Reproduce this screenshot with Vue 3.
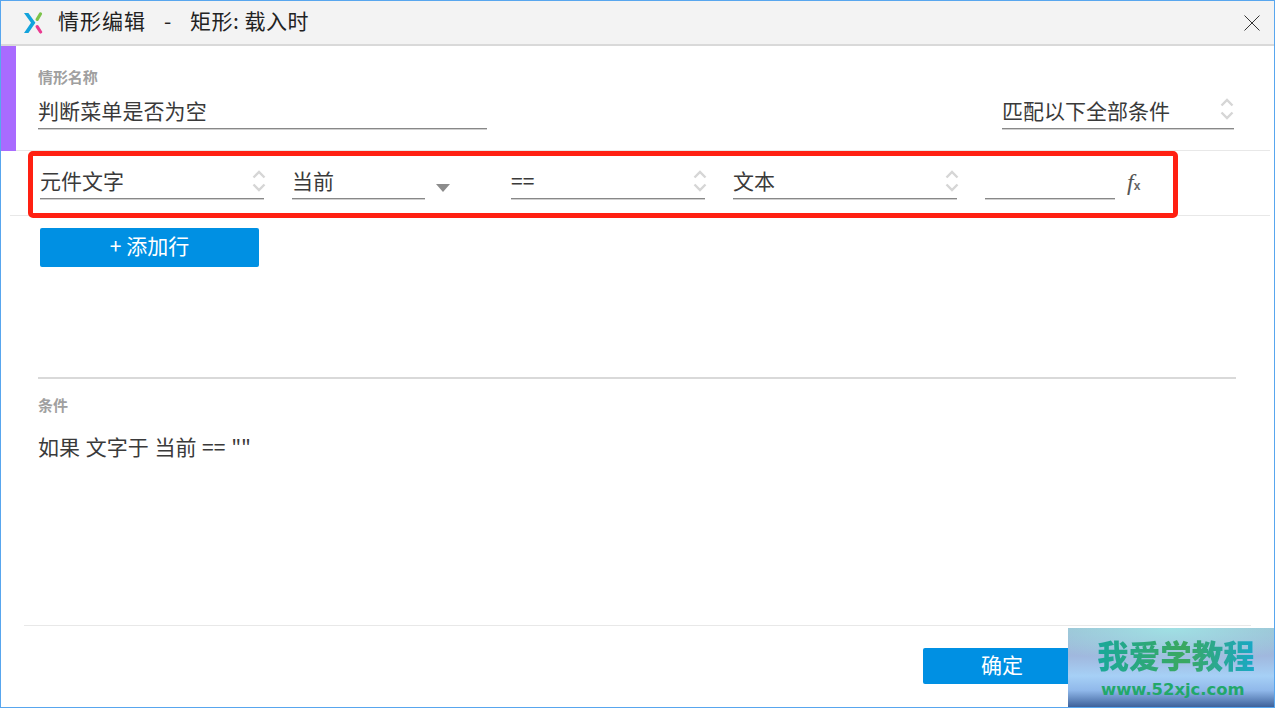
<script setup>
const fields = [
  { text: '元件文字', width: 224, gap: 28, chevron: true },
  { text: '当前', width: 133, gap: 86, caret: true },
  { text: '==', width: 194, gap: 28, chevron: true },
  { text: '文本', width: 224, gap: 28, chevron: true },
  { text: '', width: 130, gap: 0, fx: true },
]
</script>

<template>
  <div class="window">
    <header class="titlebar">
      <svg class="logo" width="20" height="22" viewBox="0 0 20 22">
        <path d="M0 1 L4.4 1 L11.4 10.8 L4.4 21 L0 21 L7 10.8 Z" fill="#12a3dc" />
        <path d="M13.2 7.4 L16.4 2" stroke="#7cc34a" stroke-width="3.2" stroke-linecap="round" fill="none" />
        <path d="M13.2 14.6 L16.6 20" stroke="#ea3a90" stroke-width="3.2" stroke-linecap="round" fill="none" />
      </svg>
      <span class="title-main">情形编辑</span>
      <span class="title-sep">-</span>
      <span class="title-sub">矩形: 载入时</span>
      <svg class="close" width="18" height="18" viewBox="0 0 18 18">
        <path d="M1.5 1.5 L16.5 16.5 M16.5 1.5 L1.5 16.5" stroke="#333" stroke-width="1" fill="none" />
      </svg>
    </header>

    <section class="head">
      <div class="accent"></div>
      <div class="head-body">
        <div class="head-left">
          <div class="label">情形名称</div>
          <div class="name-input">判断菜单是否为空</div>
        </div>
        <div class="match field">
          <span class="value">匹配以下全部条件</span>
          <svg class="chev" width="14" height="22" viewBox="0 0 14 22">
            <path d="M1.5 7.5 L7 2 L12.5 7.5 M1.5 14.5 L7 20 L12.5 14.5" stroke="#d6d6d6" stroke-width="2.4" fill="none" />
          </svg>
        </div>
      </div>
    </section>

    <section class="row">
      <template v-for="(f, i) in fields" :key="i">
        <div class="field" :style="{ width: f.width + 'px', marginRight: f.gap + 'px' }">
          <span class="value">{{ f.text }}</span>
          <svg v-if="f.chevron" class="chev" width="14" height="22" viewBox="0 0 14 22">
            <path d="M1.5 7.5 L7 2 L12.5 7.5 M1.5 14.5 L7 20 L12.5 14.5" stroke="#d6d6d6" stroke-width="2.4" fill="none" />
          </svg>
          <span v-if="f.caret" class="caret"></span>
        </div>
        <span v-if="f.fx" class="fx"><i>f</i><b>x</b></span>
      </template>
    </section>

    <div class="add-wrap">
      <button class="btn add">+ 添加行</button>
    </div>

    <section class="cond">
      <div class="label">条件</div>
      <div class="cond-text">如果 文字于 当前 == ""</div>
    </section>

    <footer class="foot">
      <button class="btn ok">确定</button>
    </footer>

    <div class="annot"></div>

    <div class="mark">
      <div class="mark-title">我爱学教程</div>
      <div class="mark-url">www.52xjc.com</div>
    </div>
  </div>
</template>

<style>
html, body { margin: 0; background: #fff; }
</style>

<style scoped>
.window {
  position: relative;
  width: 1275px;
  height: 708px;
  box-sizing: border-box;
  border: 1px solid #58a6ee;
  background: #fff;
  display: flex;
  flex-direction: column;
  overflow: hidden;
  font-family: "Noto Sans CJK SC", "Liberation Sans", sans-serif;
  color: #3a3a3a;
}
.titlebar {
  height: 45px;
  flex: none;
  box-sizing: border-box;
  background: #f3f3f3;
  border-bottom: 2px solid #d9d9d9;
  display: flex;
  align-items: center;
  padding-left: 23px;
  font-size: 21px;
  line-height: 36px;
  color: #222;
}
.logo { flex: none; }
.title-main, .title-sep, .title-sub { position: relative; top: -3px; }
.title-main { margin-left: 14px; width: 88px; letter-spacing: 1px; white-space: nowrap; }
.title-sep { margin-left: 18px; width: 26px; }
.title-sub { white-space: nowrap; letter-spacing: 0.5px; }
.close { margin-left: auto; margin-right: 13px; }

.head {
  height: 105px;
  flex: none;
  display: flex;
  box-sizing: border-box;
}
.accent { width: 15px; flex: none; background: #a96bff; }
.head-body {
  flex: 1;
  margin-right: 4px;
  border-bottom: 1px solid #e8e8e8;
  display: flex;
  align-items: flex-start;
  justify-content: space-between;
  padding: 21px 36px 0 22px;
}
.head-left { width: 449px; }
.label {
  font-size: 15px;
  font-weight: 700;
  line-height: 20px;
  color: #a0a0a0;
  letter-spacing: -0.1px;
}
.name-input {
  margin-top: 11px;
  font-size: 21px;
  line-height: 24px;
  height: 30px;
  border-bottom: 1px solid #888;
  box-shadow: 0 1px 0 #d0d0d0;
  white-space: nowrap;
  letter-spacing: 0.1px;
}
.match { width: 232px; margin-top: 29px; line-height: 28px; }

.row {
  height: 65px;
  flex: none;
  box-sizing: border-box;
  margin: 0 4px 0 9px;
  border-bottom: 1px solid #e8e8e8;
  display: flex;
  align-items: flex-start;
  padding: 15px 0 0 30px;
}
.field {
  position: relative;
  height: 33px;
  box-sizing: border-box;
  border-bottom: 1px solid #888;
  box-shadow: 0 1px 0 #d0d0d0;
  display: flex;
  flex: none;
  font-size: 21px;
  line-height: 28px;
  white-space: nowrap;
}
.chev { position: absolute; right: -2px; top: 4px; }
.match .chev { right: 0; top: 2px; }
.caret {
  position: absolute;
  left: 144px;
  top: 18px;
  width: 0;
  height: 0;
  border-left: 7px solid transparent;
  border-right: 7px solid transparent;
  border-top: 8px solid #8c8c8c;
}
.fx {
  margin-left: 12px;
  margin-top: 2px;
  font-family: "Liberation Serif", serif;
  font-size: 24px;
  line-height: 28px;
  color: #555;
  white-space: nowrap;
}
.fx i { font-style: italic; }
.fx b { font-family: "Liberation Sans", sans-serif; font-size: 12px; font-weight: 700; color: #666; }

.btn {
  display: block;
  border: none;
  padding: 0 0 4px;
  box-sizing: border-box;
  background: #0090e3;
  color: #fff;
  font-family: inherit;
  font-size: 21px;
  border-radius: 2px;
}
.add-wrap { padding: 12px 0 0 39px; flex: none; }
.add { width: 219px; height: 39px; line-height: 31px; }

.cond {
  flex: none;
  margin: 110px 38px 0 37px;
  border-top: 2px solid #d9d9d9;
  height: 248px;
  box-sizing: border-box;
  padding-top: 16px;
}
.cond-text {
  margin-top: 16px;
  font-size: 21px;
  line-height: 30px;
  white-space: nowrap;
  word-spacing: 1px;
}
.foot {
  margin: 0 23px;
  border-top: 1px solid #e8e8e8;
  padding: 22px 0 0 899px;
  flex: 1;
}
.ok { width: 158px; height: 36px; line-height: 28px; }

.annot {
  position: absolute;
  left: 27px;
  top: 150px;
  width: 1150px;
  height: 67px;
  box-sizing: border-box;
  border: 5px solid #ff2012;
  border-radius: 5px;
  pointer-events: none;
}
.mark {
  position: absolute;
  left: 1067px;
  top: 627px;
  width: 207px;
  height: 80px;
  background:
    radial-gradient(ellipse 70% 45% at 50% 0%, #a0e0e4 0%, rgba(160,224,228,0) 100%),
    linear-gradient(180deg, #9cc0d4 0%, #a0b8de 35%, #a6d0f6 60%, #90b8ea 78%, #385c96 100%);
  text-align: center;
}
.mark-title {
  margin: 5px 0 0 29px;
  width: 158px;
  font-size: 31.5px;
  line-height: 42px;
  font-weight: 900;
  white-space: nowrap;
  background: linear-gradient(90deg, #1aa89a 0%, #3aa860 55%, #18a8c8 100%);
  -webkit-background-clip: text;
  background-clip: text;
  color: transparent;
}
.mark-url {
  margin-left: 33px;
  width: 143px;
  font-family: "DejaVu Sans", "Liberation Sans", sans-serif;
  font-size: 16.4px;
  font-weight: 700;
  line-height: 22px;
  margin-top: 4px;
  color: #22a86a;
  white-space: nowrap;
}
</style>
